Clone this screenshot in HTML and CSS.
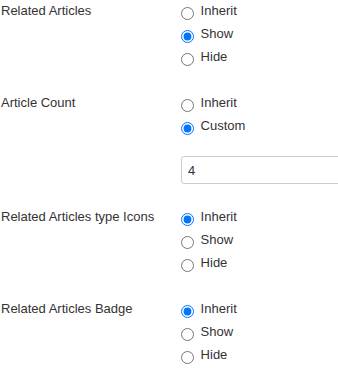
FILE: index.html
```html
<!DOCTYPE html>
<html lang="en">
  <head>
    <meta charset="UTF-8" />
    <meta name="viewport" content="width=device-width, initial-scale=1.0" />
    <title>Related Articles</title>
    <link rel="stylesheet" href="styles.css">
  </head>
  <body>
    <form action="#" class="settings">
      <div class="field">
        <div class="field-label">Related Articles</div>
        <div class="field-options">
          <label class="opt"><input type="radio" name="related"> Inherit</label>
          <label class="opt"><input type="radio" name="related" checked> Show</label>
          <label class="opt"><input type="radio" name="related"> Hide</label>
        </div>
      </div>

      <div class="field field-count">
        <div class="field-label">Article Count</div>
        <div class="field-options">
          <label class="opt"><input type="radio" name="count"> Inherit</label>
          <label class="opt"><input type="radio" name="count" checked> Custom</label>
          <input type="text" class="count-input" value="4">
        </div>
      </div>

      <div class="field">
        <div class="field-label">Related Articles type Icons</div>
        <div class="field-options">
          <label class="opt"><input type="radio" name="icons" checked> Inherit</label>
          <label class="opt"><input type="radio" name="icons"> Show</label>
          <label class="opt"><input type="radio" name="icons"> Hide</label>
        </div>
      </div>

      <div class="field">
        <div class="field-label">Related Articles Badge</div>
        <div class="field-options">
          <label class="opt"><input type="radio" name="badge" checked> Inherit</label>
          <label class="opt"><input type="radio" name="badge"> Show</label>
          <label class="opt"><input type="radio" name="badge"> Hide</label>
        </div>
      </div>
    </form>
  </body>
</html>
```

FILE: styles.css
```css
body {
  margin: 0;
  font-family: "Liberation Sans", Arial, sans-serif;
  font-size: 13px;
  color: #333;
  background: #fff;
  overflow: hidden;
}
.settings {
  padding-left: 1px;
}
.field {
  display: flex;
  padding-bottom: 23px;
}
.field:last-child {
  padding-bottom: 0;
}
.field-count {
  padding-bottom: 22px;
}
.field-label {
  flex: 0 0 175px;
  line-height: 21px;
}
.field-options {
  flex: 1;
  min-width: 0;
  overflow: hidden;
}
.opt {
  display: block;
  line-height: 21px;
  margin-bottom: 2px;
  cursor: pointer;
}
.field:last-child .opt:last-child {
  margin-bottom: 0;
}
.opt input {
  vertical-align: middle;
  margin: 3px 3px 0 5px;
}
.count-input {
  display: block;
  box-sizing: border-box;
  width: 190px;
  height: 28px;
  margin: 20px 0 0 5px;
  padding: 0 6px;
  border: 1px solid #ccc;
  border-radius: 3px;
  font-family: "Liberation Sans", Arial, sans-serif;
  font-size: 13px;
  color: #333;
}
```
